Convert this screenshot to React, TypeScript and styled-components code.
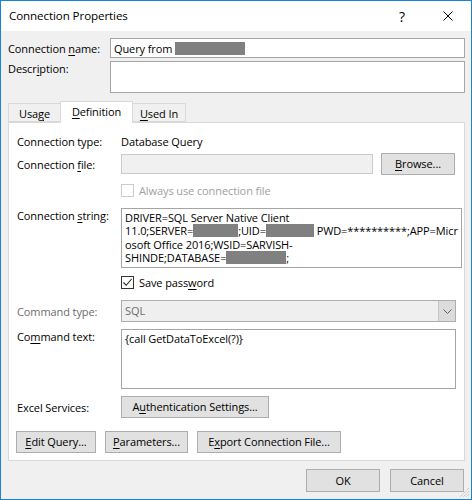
import React from 'react';
import styled, { createGlobalStyle } from 'styled-components';

const FONT = `"Open Sans", "Noto Sans", "Liberation Sans", sans-serif`;

const Global = createGlobalStyle`
  html, body { margin: 0; padding: 0; background: #ffffff; }
  * { box-sizing: border-box; }
`;

const Window = styled.div`
  position: relative;
  width: 472px;
  height: 500px;
  border: 1px solid #1883d7;
  background: #f0f0f0;
  display: flex;
  flex-direction: column;
  font-family: ${FONT};
  font-size: 11px;
  letter-spacing: -0.1px;
  color: #000;
`;

const TitleBar = styled.div`
  height: 30px;
  background: #ffffff;
  display: flex;
  align-items: center;
  padding-left: 8px;
  flex-shrink: 0;
`;

const Title = styled.div`
  flex: 1;
  font-size: 11.6px;
  padding-bottom: 1px;
`;

const CaptionButton = styled.div`
  width: 46px;
  height: 30px;
  display: flex;
  align-items: center;
  justify-content: center;
  font-size: 14px;
  color: #000;
`;

const Body = styled.div`
  flex: 1;
  display: flex;
  flex-direction: column;
  padding: 7px 6px 0 7px;
`;

const TopRow = styled.div<{ $mt?: number; $h: number; $align?: string }>`
  display: flex;
  align-items: ${(p) => p.$align ?? 'center'};
  height: ${(p) => p.$h}px;
  margin-top: ${(p) => p.$mt ?? 0}px;
`;

const Label = styled.div<{ $w: number; $disabled?: boolean; $lh?: number }>`
  width: ${(p) => p.$w}px;
  flex-shrink: 0;
  line-height: ${(p) => p.$lh ?? 15}px;
  color: ${(p) => (p.$disabled ? '#6d6d6d' : '#000')};
  white-space: nowrap;
`;

const Key = styled.span`
  text-decoration: underline;
  text-underline-offset: 2px;
  text-decoration-thickness: 1px;
`;

const TextBox = styled.div<{ $h: number; $w?: number; $disabled?: boolean }>`
  ${(p) => (p.$w ? `width: ${p.$w}px;` : 'flex: 1;')}
  height: ${(p) => p.$h}px;
  border: 1px solid ${(p) => (p.$disabled ? '#cccccc' : '#a5a5a5')};
  background: ${(p) => (p.$disabled ? '#f0f0f0' : '#ffffff')};
  padding: 1px 3px;
  display: flex;
  align-items: center;
  white-space: pre;
`;

const MultiLine = styled.div<{ $h: number }>`
  flex: 1;
  height: ${(p) => p.$h}px;
  border: 1px solid #a5a5a5;
  background: #ffffff;
  padding: 2px 3px;
  line-height: 13.3px;
`;

const Line = styled.div`
  white-space: pre;
  display: flex;
  align-items: center;
  height: 13.3px;
`;

const Redact = styled.span<{ $w: number }>`
  display: inline-block;
  width: ${(p) => p.$w}px;
  height: 13px;
  background: #808080;
  flex-shrink: 0;
`;

const TabStrip = styled.div`
  display: flex;
  align-items: flex-end;
  height: 21px;
  margin-top: 8px;
  flex-shrink: 0;
`;

const Tab = styled.div<{ $w: number; $active?: boolean; $first?: boolean }>`
  position: relative;
  width: ${(p) => p.$w}px;
  height: ${(p) => (p.$active ? 22 : 19)}px;
  margin-bottom: ${(p) => (p.$active ? -1 : 0)}px;
  margin-left: ${(p) => (p.$first ? 0 : -1)}px;
  z-index: ${(p) => (p.$active ? 2 : 1)};
  border: 1px solid #d9d9d9;
  border-bottom: ${(p) => (p.$active ? 'none' : '1px solid #d9d9d9')};
  background: ${(p) => (p.$active ? '#ffffff' : '#f0f0f0')};
  display: flex;
  justify-content: center;
  padding-top: 2px;
  line-height: 15px;
`;

const Panel = styled.div`
  position: relative;
  z-index: 1;
  height: 339px;
  border: 1px solid #d9d9d9;
  background: #ffffff;
  display: flex;
  flex-direction: column;
  padding: 0 8px 7px 8px;
  flex-shrink: 0;
`;

const Row = styled.div<{ $mt: number; $h: number; $align?: string }>`
  display: flex;
  align-items: ${(p) => p.$align ?? 'center'};
  height: ${(p) => p.$h}px;
  margin-top: ${(p) => p.$mt}px;
  flex-shrink: 0;
`;

const Spacer = styled.div<{ $w: number }>`
  width: ${(p) => p.$w}px;
  flex-shrink: 0;
`;

const Button = styled.div<{ $w: number; $h?: number }>`
  width: ${(p) => p.$w}px;
  height: ${(p) => p.$h ?? 22}px;
  flex-shrink: 0;
  background: #e1e1e1;
  border: 1px solid #adadad;
  display: flex;
  align-items: center;
  justify-content: center;
  white-space: pre;
  padding-bottom: 1px;
`;

const CheckRow = styled.div<{ $disabled?: boolean }>`
  display: flex;
  align-items: center;
  gap: 5px;
  color: ${(p) => (p.$disabled ? '#a0a0a0' : '#000')};
`;

const CheckText = styled.span`
  white-space: pre;
  line-height: 15px;
`;

const CheckBox = styled.div<{ $disabled?: boolean }>`
  width: 13px;
  height: 13px;
  border: 1px solid ${(p) => (p.$disabled ? '#cccccc' : '#333333')};
  background: #ffffff;
  display: flex;
  align-items: center;
  justify-content: center;
`;

const Select = styled.div`
  flex: 1;
  height: 22px;
  border: 1px solid #adadad;
  background: #efefef;
  display: flex;
  align-items: stretch;
  color: #6d6d6d;
`;

const SelectValue = styled.div`
  flex: 1;
  display: flex;
  align-items: center;
  padding: 0 3px 1px 3px;
`;

const SelectArrow = styled.div`
  width: 17px;
  background: #dcdcdc;
  border-left: 1px solid #c4c4c4;
  display: flex;
  align-items: center;
  justify-content: center;
`;

const ButtonRow = styled.div<{ $mt: number; $gap: number; $ml?: number; $mr?: number; $end?: boolean }>`
  display: flex;
  gap: ${(p) => p.$gap}px;
  margin-top: ${(p) => p.$mt}px;
  margin-left: ${(p) => p.$ml ?? 0}px;
  margin-right: ${(p) => p.$mr ?? 0}px;
  justify-content: ${(p) => (p.$end ? 'flex-end' : 'flex-start')};
  flex-shrink: 0;
`;

const Grip = styled.svg`
  position: absolute;
  right: 1px;
  bottom: 1px;
`;

export default function App() {
  return (
    <>
      <Global />
      <Window>
        <TitleBar>
          <Title>Connection Properties</Title>
          <CaptionButton>?</CaptionButton>
          <CaptionButton>
            <svg width="10" height="10" viewBox="0 0 10 10">
              <path d="M0.5 0.5 L9.5 9.5 M9.5 0.5 L0.5 9.5" stroke="#000" strokeWidth="1" fill="none" />
            </svg>
          </CaptionButton>
        </TitleBar>
        <Body>
          <TopRow $h={20}>
            <Label $w={102}>
              Connection <Key>n</Key>ame:
            </Label>
            <TextBox $h={20}>
              <span>Query from </span>
              <Redact $w={70} />
            </TextBox>
          </TopRow>
          <TopRow $mt={3} $h={32} $align="flex-start">
            <Label $w={102}>
              Descr<Key>i</Key>ption:
            </Label>
            <TextBox $h={32} />
          </TopRow>
          <TabStrip>
            <Tab $w={53} $first>
              <span>
                Usa<Key>g</Key>e
              </span>
            </Tab>
            <Tab $w={73} $active>
              <span>
                <Key>D</Key>efinition
              </span>
            </Tab>
            <Tab $w={54}>
              <span>
                <Key>U</Key>sed In
              </span>
            </Tab>
          </TabStrip>
          <Panel>
            <Row $mt={8} $h={20}>
              <Label $w={104}>Connection type:</Label>
              <span>Database Query</span>
            </Row>
            <Row $mt={2} $h={22}>
              <Label $w={104}>
                Connection <Key>f</Key>ile:
              </Label>
              <TextBox $h={20} $w={252} $disabled />
              <Spacer $w={8} />
              <Button $w={74}>
                <span>
                  <Key>B</Key>rowse...
                </span>
              </Button>
            </Row>
            <Row $mt={9} $h={13}>
              <Label $w={104} />
              <CheckRow $disabled>
                <CheckBox $disabled />
                <CheckText>Always use connection file</CheckText>
              </CheckRow>
            </Row>
            <Row $mt={11} $h={60} $align="flex-start">
              <Label $w={104}>
                Connection <Key>s</Key>tring:
              </Label>
              <MultiLine $h={60}>
                <Line>DRIVER=SQL Server Native Client</Line>
                <Line>
                  <span>11.0;SERVER=</span>
                  <Redact $w={45} />
                  <span>;UID=</span>
                  <Redact $w={48} />
                  <span> PWD=**********;APP=Micr</span>
                </Line>
                <Line>osoft Office 2016;WSID=SARVISH-</Line>
                <Line>
                  <span>SHINDE;DATABASE=</span>
                  <Redact $w={60} />
                  <span>;</span>
                </Line>
              </MultiLine>
            </Row>
            <Row $mt={8} $h={13}>
              <Label $w={104} />
              <CheckRow>
                <CheckBox>
                  <svg width="11" height="11" viewBox="0 0 11 11">
                    <path d="M1.5 5.5 L4.2 8.3 L9.6 2" stroke="#222" strokeWidth="1.1" fill="none" />
                  </svg>
                </CheckBox>
                <CheckText>
                  Save pass<Key>w</Key>ord
                </CheckText>
              </CheckRow>
            </Row>
            <Row $mt={11} $h={22}>
              <Label $w={104} $disabled>
                Command type:
              </Label>
              <Select>
                <SelectValue>SQL</SelectValue>
                <SelectArrow>
                  <svg width="9" height="5" viewBox="0 0 9 5">
                    <path d="M0.5 0.5 L4.5 4.5 L8.5 0.5" stroke="#606060" strokeWidth="1" fill="none" />
                  </svg>
                </SelectArrow>
              </Select>
            </Row>
            <Row $mt={7} $h={60} $align="flex-start">
              <Label $w={104}>
                Co<Key>m</Key>mand text:
              </Label>
              <MultiLine $h={60}>
                <Line>{'{call GetDataToExcel(?)}'}</Line>
              </MultiLine>
            </Row>
            <Row $mt={7} $h={22}>
              <Label $w={104}>Excel Services:</Label>
              <Button $w={148}>
                <span>
                  A<Key>u</Key>thentication Settings...
                </span>
              </Button>
            </Row>
            <ButtonRow $mt={13} $gap={9} $ml={-1}>
              <Button $w={80}>
                <span>
                  <Key>E</Key>dit Query...
                </span>
              </Button>
              <Button $w={83}>
                <span>
                  <Key>P</Key>arameters...
                </span>
              </Button>
              <Button $w={144}>
                <span>
                  E<Key>x</Key>port Connection File...
                </span>
              </Button>
            </ButtonRow>
          </Panel>
          <ButtonRow $mt={8} $gap={10} $mr={1} $end>
            <Button $w={74} $h={23}>
              OK
            </Button>
            <Button $w={74} $h={23}>
              Cancel
            </Button>
          </ButtonRow>
        </Body>
        <Grip width="10" height="10" viewBox="0 0 10 10">
          <path d="M9 3 L3 9 M9 6 L6 9 M9 0 L0 9" stroke="#b0b0b0" strokeWidth="1" strokeDasharray="1 1" fill="none" />
        </Grip>
      </Window>
    </>
  );
}
